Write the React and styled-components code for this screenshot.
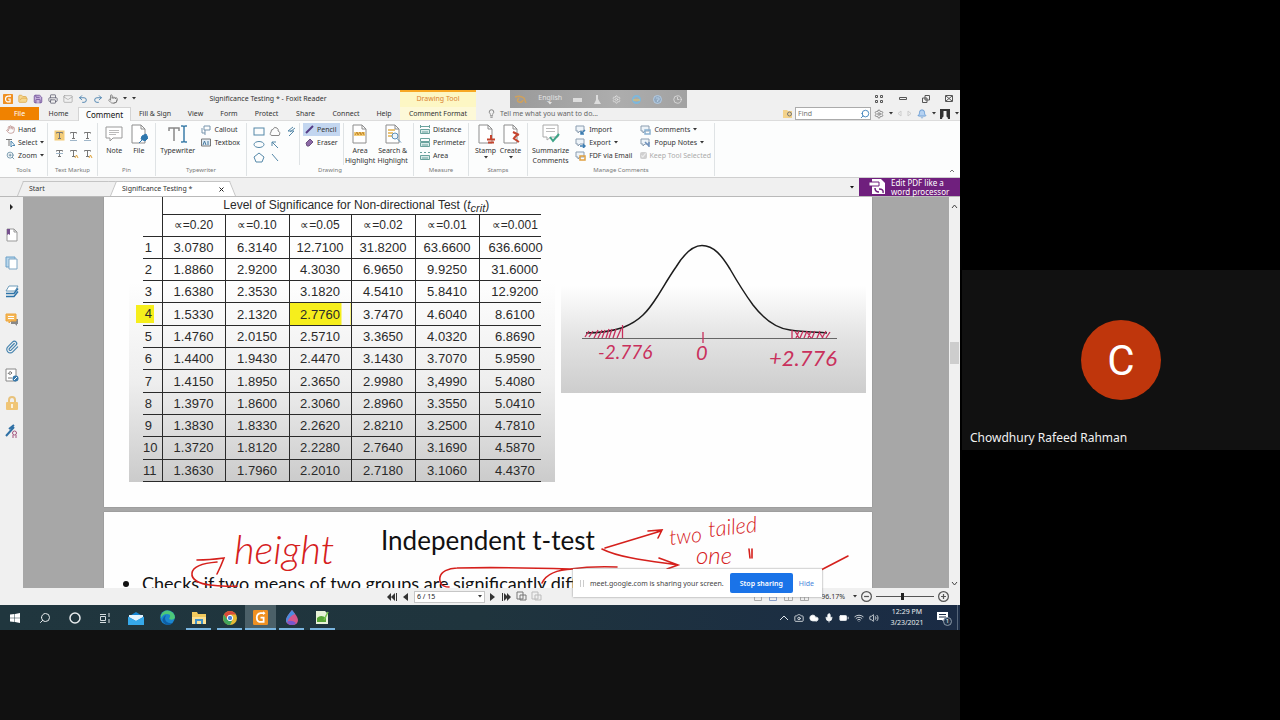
import React, { useState } from 'react';
import styled, { createGlobalStyle } from 'styled-components';
import {
    Search, Bell, Settings, Undo2, Redo2, Printer, Save, Mail, FolderOpen, Pointer, ZoomIn, Hand,
    Lightbulb, Paperclip, Mic, Volume2, Cloud, Wifi, Circle, Clock3, Camera, BatteryMedium,
} from 'lucide-react';

const GlobalStyle = createGlobalStyle`
    * { box-sizing: border-box; }
    body {
        margin: 0;
        background: #000;
        font-family: "Noto Sans", "Open Sans", sans-serif;
    }
    button, input, select { font-family: inherit; }
    svg { flex: none; display: block; }
`;

/* ---------- meeting ---------- */

const Meeting = styled.div`
    display: flex;
    min-height: 100vh;
`;
const Presentation = styled.main`
    flex: 3;
    min-width: 0;
    display: flex;
    align-items: center;
    background: #111;
`;
const Participants = styled.aside`
    flex: 1;
    min-width: 0;
    display: flex;
    align-items: center;
    background: #000;
`;
const Tile = styled.div`
    flex: 1;
    margin-left: 2px;
    height: 180px;
    background: #111;
    color: #f1f1f1;
    display: grid;
    grid-template-rows: 1fr auto 1fr;
    justify-items: center;
`;
const Avatar = styled.div`
    grid-row: 2;
    width: 80px;
    height: 80px;
    border-radius: 50%;
    background: #bf360c;
    color: #fff;
    display: flex;
    align-items: center;
    justify-content: center;
    font: 42px Roboto, sans-serif;
`;
const PersonName = styled.div`
    grid-row: 3;
    align-self: end;
    justify-self: start;
    padding: 0 8px 3px;
    font-size: 12px;
    line-height: 18px;
`;

/* ---------- reader window ---------- */

const Screen = styled.div`
    position: relative;
    width: 100%;
    aspect-ratio: 16 / 9;
    overflow: hidden;
    display: flex;
    flex-direction: column;
    background: #f0f0f0;
    color: #333;
    font-size: 7px;
    line-height: 10px;
    white-space: nowrap;
`;
const TitleBar = styled.div`
    height: 17px;
    flex: none;
    display: flex;
    align-items: center;
`;
const QuickAccess = styled.div`
    width: 136px;
    padding-left: 3px;
    display: flex;
    align-items: center;
    gap: 5px;
`;
const WindowTitle = styled.div`
    width: 264px;
    text-align: center;
`;
const ToolTitle = styled.div`
    width: 76px;
    height: 17px;
    line-height: 14px;
    text-align: center;
    color: #d88233;
    background: #fdf7c4;
    border-top: 2px solid #f7a823;
`;
const Spacer = styled.div`
    flex: 1;
`;
const IconButton = styled.button`
    border: 0;
    padding: 0;
    background: none;
    color: ${(p) => p.$color || '#444'};
    width: ${(p) => (p.$w ? `${p.$w}px` : 'auto')};
    align-self: ${(p) => p.$align || 'auto'};
    display: flex;
    align-items: center;
    justify-content: center;
`;
const InputToolbar = styled.div`
    position: absolute;
    left: 510px;
    top: 0;
    width: 177px;
    height: 18px;
    padding: 0 5px 0 4px;
    display: flex;
    align-items: center;
    justify-content: space-between;
    color: #e4e4e4;
    background: linear-gradient(90deg, #9a9a9a, #adadad 60%, #a2a2a2);
`;
const Language = styled.button`
    border: 0;
    padding: 0;
    background: none;
    color: inherit;
    font-size: 7px;
    line-height: 9px;
    display: flex;
    flex-direction: column;
    align-items: center;
`;

const TabRow = styled.nav`
    height: 14px;
    flex: none;
    display: flex;
    align-items: stretch;
    border-bottom: 1px solid #dcdcdc;
`;
const RibbonTab = styled.button`
    width: ${(p) => p.$w}px;
    border: 0;
    padding: 0;
    font-size: 7px;
    line-height: 13px;
    color: ${(p) => (p.$file ? '#fff' : '#333')};
    background: ${(p) => (p.$file ? '#f08200' : p.$tool ? '#fdf9d8' : 'none')};
    ${(p) => p.$active && `
        background: #fcfdfd;
        color: #111;
        margin-bottom: -1px;
        box-shadow: inset 1px 1px #d4d4d4, inset -1px 0 #d4d4d4;
        font-size: 8px;
    `}
`;
const TellMe = styled.div`
    display: flex;
    align-items: center;
    gap: 4px;
    padding-left: 11px;
    color: #666;
`;
const FindBox = styled.label`
    display: flex;
    align-items: center;
    gap: 2px;
    color: #d9a441;
`;
const FindField = styled.span`
    display: flex;
    align-items: center;
    width: 76px;
    height: 13px;
    background: #fff;
    border: 1px solid #ababab;
    color: #2f77b5;
    input {
        flex: 1;
        min-width: 0;
        border: 0;
        padding: 0 2px;
        outline: 0;
        background: none;
        font-size: 7px;
    }
`;
const MirroredSearch = styled(Search)`
    transform: scaleX(-1);
`;
const AccountTools = styled.div`
    width: 89px;
    padding: 0 1px 0 3px;
    display: flex;
    align-items: center;
    justify-content: space-between;
`;

const Ribbon = styled.div`
    height: 57px;
    flex: none;
    display: flex;
    padding: 2px 0 1px;
    background: #fcfdfd;
    border-bottom: 1px solid #cfcfcf;
`;
const Group = styled.section`
    width: ${(p) => p.$w}px;
    border-right: 1px solid #dfe3e5;
    display: flex;
    flex-direction: column;
`;
const GroupBody = styled.div`
    height: 42px;
    flex: none;
    display: flex;
    gap: ${(p) => p.$gap || 0}px;
    padding: 0 4px;
`;
const GroupName = styled.div`
    text-align: center;
    color: #777;
    font-size: 6px;
    line-height: 11px;
`;
const Stack = styled.div`
    display: flex;
    flex-direction: column;
    ${(p) => p.$ruled && 'border-left: 1px solid #dfe3e5; border-right: 1px solid #dfe3e5; padding: 0 3px;'}
`;
const SmallTool = styled.button`
    height: 13px;
    border: 0;
    padding: 0 2px;
    display: flex;
    align-items: center;
    gap: 3px;
    font-size: 7px;
    color: #333;
    background: ${(p) => (p.$on ? '#c3d6f0' : 'none')};
`;
const BigTool = styled.button`
    flex: 1;
    border: 0;
    padding: 1px 0 0;
    background: none;
    display: flex;
    flex-direction: column;
    align-items: center;
    font-size: 7px;
    line-height: 10px;
    color: #333;
    svg { margin-bottom: 2px; }
`;
const ToolGrid = styled.div`
    display: grid;
    grid-template-columns: repeat(3, ${(p) => p.$cell}px);
    grid-auto-rows: ${(p) => p.$row}px;
    align-content: center;
`;
const KeepSelected = styled.label`
    height: 13px;
    padding: 0 2px;
    display: flex;
    align-items: center;
    gap: 2px;
    color: #aaa;
    input {
        width: 7px;
        height: 7px;
        margin: 0;
    }
`;

const DocTabs = styled.div`
    height: 19px;
    flex: none;
    display: flex;
    align-items: flex-end;
    padding-left: 23px;
    border-bottom: 1px solid #b9b9b9;
`;
const DocTab = styled.div`
    position: relative;
    height: 15px;
    width: ${(p) => p.$w}px;
    padding: 0 6px;
    display: flex;
    align-items: center;
    justify-content: space-between;
    border-top: 1px solid #c4c4c4;
    background: ${(p) => (p.$active ? '#fff' : '#f0f0f0')};
    &::before, &::after {
        content: '';
        position: absolute;
        top: -1px;
        bottom: 0;
        width: 7px;
        background: inherit;
        border-top: 1px solid #c4c4c4;
    }
    &::before {
        left: -3px;
        transform: skewX(-22deg);
        border-left: 1px solid #c4c4c4;
    }
    &::after {
        right: -3px;
        transform: skewX(22deg);
        border-right: 1px solid #c4c4c4;
    }
    span, button { position: relative; z-index: 1; }
`;
const Promo = styled.a`
    align-self: stretch;
    width: 101px;
    margin-left: 4px;
    padding-left: 10px;
    display: flex;
    align-items: center;
    gap: 5px;
    background: #6f1f7d;
    color: #fff;
    font-size: 8px;
    line-height: 9px;
    text-decoration: none;
`;

const Workspace = styled.div`
    flex: 1;
    min-height: 0;
    display: flex;
`;
const SideBar = styled.div`
    width: 23px;
    display: flex;
    flex-direction: column;
    align-items: center;
    gap: 12px;
    padding-top: 2px;
    button { height: 16px; }
`;
const Pages = styled.div`
    flex: 1;
    min-width: 0;
    overflow: hidden;
    padding: 0 77px 0 81px;
    display: flex;
    flex-direction: column;
    gap: 5px;
    background: #a7a7a7;
`;
const Sheet = styled.article`
    position: relative;
    height: ${(p) => p.$h}px;
    flex: none;
    background: #fefefe;
    box-shadow: 0 0 1px #777;
    color: #111;
`;
const Figures = styled.div`
    display: flex;
    padding-left: 25px;
    gap: 6px;
`;
const TableFigure = styled.div`
    padding: 0 14px;
    height: 285px;
    background: linear-gradient(#fefefe 30%, #eee 65%, #cbcbcb);
`;
const CritTable = styled.table`
    border-collapse: collapse;
    table-layout: fixed;
    width: 398px;
    height: 285px;
    font: 13px "Liberation Sans", sans-serif;
    color: #2a2a2a;
    th, td {
        padding: 0;
        font-weight: 400;
        text-align: center;
        line-height: 15px;
        border-bottom: 1px solid #2a2a2a;
        border-left: 1px solid #2a2a2a;
    }
    thead th { font-size: 12px; }
    tr { height: 22px; }
    tr > :first-child {
        border-left: 0;
        padding-right: 8px;
    }
    tr > :nth-child(7) { padding-left: 9px; }
    thead tr:first-child { height: 17px; }
    thead tr:first-child > :first-child { border-bottom: 0; }
    thead tr:first-child > :last-child { padding-left: 9px; }
    sub {
        font-size: 11px;
        line-height: 0;
    }
`;
const MarkedCell = styled.td`
    background: linear-gradient(90deg, #f6ee1c 52px, transparent 52px);
`;
const RowMark = styled.mark`
    display: block;
    margin: 0 0 0 -7px;
    padding-left: 7px;
    line-height: 18px;
    background: #f6ee1c;
    color: inherit;
`;
const Curve = styled.svg`
    margin-top: 43px;
    width: 305px;
    height: 153px;
`;
const Heading = styled.h1`
    margin: 0;
    padding: 11px 0 0 277px;
    font: 26px/34px Lato, sans-serif;
`;
const Bullets = styled.ul`
    margin: 0;
    padding: 16px 0 0 38px;
    font: 18px/20px Lato, sans-serif;
`;
const Ink = styled.svg`
    position: absolute;
    left: 0;
    top: 0;
    overflow: visible;
    text { font-family: Lato, sans-serif; font-style: italic; font-weight: 300; }
`;
const ScrollBar = styled.div`
    width: 11px;
    display: flex;
    flex-direction: column;
    align-items: center;
    justify-content: space-between;
    padding: 7px 0 2px;
    background: #f0f0f0;
`;
const ScrollThumb = styled.div`
    width: 9px;
    height: 22px;
    margin: 133px 0 auto;
    background: #cdcdcd;
`;

const StatusBar = styled.div`
    height: 17px;
    flex: none;
    display: flex;
    align-items: center;
    padding-left: 387px;
    color: #333;
`;
const PageNav = styled.div`
    display: flex;
    align-items: center;
    gap: 4px;
`;
const PageField = styled.div`
    width: 71px;
    height: 12px;
    padding-right: 2px;
    display: flex;
    align-items: center;
    border: 1px solid #c6c6c6;
    background: #fff;
`;
const PageSelect = styled.select`
    appearance: none;
    flex: 1;
    height: 10px;
    padding: 0 0 0 2px;
    border: 0;
    background: none;
    color: #222;
    font-size: 7px;
    line-height: 10px;
`;
const ViewTools = styled.div`
    display: flex;
    align-items: center;
    gap: 7px;
    color: #999;
`;
const Zoom = styled.div`
    display: flex;
    align-items: center;
    gap: 4px;
    padding: 0 11px 0 12px;
`;
const ZoomSlider = styled.input`
    appearance: none;
    width: 58px;
    height: 9px;
    margin: 0;
    background: linear-gradient(#555, #555) center / 100% 1px no-repeat;
    &::-webkit-slider-thumb {
        appearance: none;
        width: 3px;
        height: 7px;
        background: #222;
    }
`;
const ShareBar = styled.div`
    position: absolute;
    left: 573px;
    top: 479px;
    width: 249px;
    height: 28px;
    padding: 0 8px 0 7px;
    display: flex;
    align-items: center;
    justify-content: space-between;
    background: #fff;
    color: #444;
    box-shadow: 0 0 2px #888;
    font: 7px "Noto Sans", sans-serif;
`;
const StopButton = styled.button`
    width: 63px;
    height: 20px;
    padding: 0;
    border: 0;
    border-radius: 2px;
    background: #1a73e8;
    color: #fff;
    font-size: 7px;
    font-weight: 600;
`;
const HideButton = styled.button`
    border: 0;
    padding: 0;
    background: none;
    color: #4a86dc;
    font-size: 7px;
`;
const Grip = styled.span`
    width: 4px;
    height: 7px;
    border: 1px solid #ccc;
    border-width: 0 1px;
`;

const TaskBar = styled.div`
    height: 25px;
    flex: none;
    display: flex;
    background: linear-gradient(90deg, #20363e, #1f343d 50%, #1a2b45);
    color: #e8ecee;
`;
const TaskButton = styled.button`
    width: ${(p) => p.$w || 31}px;
    border: 0;
    padding: 0;
    display: flex;
    align-items: center;
    justify-content: center;
    color: inherit;
    background: ${(p) => (p.$active ? '#4b6068' : 'none')};
    background-clip: padding-box;
    ${(p) => p.$open && `
        box-shadow: inset 0 -2px #79b4de;
        border-left: 3px solid transparent;
        border-right: 3px solid transparent;
    `}
    ${(p) => p.$active && 'border-width: 0;'}
`;
const Tray = styled.div`
    display: flex;
    align-items: center;
    gap: 5px;
    padding-right: 8px;
`;
const Clock = styled.div`
    width: 40px;
    text-align: center;
    line-height: 11px;
    padding-top: 1px;
    font-size: 7px;
`;
const Notice = styled.button`
    position: relative;
    width: 31px;
    border: 0;
    border-right: 1px solid #56667a;
    margin: 0 2px 0 0;
    padding: 0;
    background: none;
    display: flex;
    align-items: center;
    justify-content: center;
    color: #fff;
`;
const NoticeCount = styled.span`
    position: absolute;
    left: 16px;
    top: 12px;
    width: 9px;
    height: 9px;
    border-radius: 50%;
    border: 1px solid #8b99a8;
    background: #22344c;
    color: #fff;
    font-size: 6px;
    line-height: 7px;
`;

/* ---------- icons ---------- */

const Svg = ({ w = 10, h = w, box = `0 0 ${w} ${h}`, children, ...rest }) => (
    <svg width={w} height={h} viewBox={box} fill="none" stroke="#777" strokeWidth="1" aria-hidden="true" {...rest}>
        {children}
    </svg>
);
const Caret = ({ color = '#333', size = 4 }) => (
    <Svg w={size} h={3} box="0 0 4 3" stroke="none" fill={color}><path d="M0 0h4l-2 2.6z" /></Svg>
);
const FoxitLogo = ({ size }) => (
    <Svg w={size} box="0 0 12 12">
        <rect width="12" height="12" rx="1" fill="#ef9022" stroke="none" />
        <path d="M9 2.500H6Q3 3 3 6t2 3.500h3.500V6H6" stroke="#fff" strokeWidth="1.400" />
        <path d="M8 1l2 1.500L8 4z" fill="#fff" stroke="none" />
    </Svg>
);
const Markup = ({ on, extra, blue }) => (
    <Svg w={11} box="0 0 11 11" stroke="#777">
        {on && <rect x=".5" y=".5" width="10" height="10" fill="#f3cc78" stroke="none" />}
        <path d="M2.500 3.500v-1h6v1M5.500 2.500v6M4 8.500h3" />
        {extra && <path d={extra} stroke={blue ? '#9fb6c9' : '#e0a33a'} />}
    </Svg>
);
const FileSheet = ({ children }) => (
    <Svg w={18} h={20}>
        <path d="M2 1h9l4 4v14H2z M11 1v4h4" fill="#fff" stroke="#8d8d8d" />
        {children}
    </Svg>
);
const Measure = ({ d }) => (
    <Svg w={10} h={9} stroke="#6aa29d"><path d="M.500 4.500v4h9v-4zM3 8V6M5 8V6M7 8V6" fill="#d9ebe9" /><path d={d} /></Svg>
);
const Transfer = ({ color, d }) => (
    <Svg w={11} h={10}>
        <path d="M1 1h8v5H5L3 8V6H1z" fill="#eef4f9" stroke="#8b9db0" />
        <path d={d} stroke={color} strokeWidth="1.500" />
    </Svg>
);

const quick = [
    ['Foxit', <FoxitLogo size={10} />],
    ['Open', <FolderOpen size={10} color="#dda94c" fill="#f6d891" />],
    ['Save', <Save size={10} color="#6b4a94" fill="#c8b5de" />],
    ['Print', <Printer size={10} color="#667" />],
    ['Email', <Mail size={10} color="#999" strokeWidth={1.5} />],
    ['Undo', <Undo2 size={10} color="#3b77a8" />],
    ['Redo', <Redo2 size={10} color="#3b77a8" />],
    ['Touch mode', <Pointer size={10} color="#777" />],
];

const tabs = [
    ['File', 39], ['Home', 39], ['Comment', 53], ['Fill & Sign', 48], ['View', 33], ['Form', 34],
    ['Protect', 41], ['Share', 37], ['Connect', 44], ['Help', 32], ['Comment Format', 76],
];

const markups = [
    { name: 'Highlight', on: true },
    { name: 'Squiggly', extra: 'M2 10.5h7', blue: true },
    { name: 'Underline', extra: 'M2 10.5h7', blue: true },
    { name: 'Strikeout', extra: 'M2 5.5h7', blue: true },
    { name: 'Replace', extra: 'M7 10l1.500-3 1.500 3' },
    { name: 'Insert', extra: 'M7 10l1.500-3 1.500 3' },
];

const shapes = [
    ['Rectangle', <rect x="1" y="2" width="10" height="7" />],
    ['Cloud', <path d="M3 9.500Q0 9 2 6 2 3 4 3.500 5 0 8 2q2 2 1 3 3 1 1 4.500z" stroke="#888" />],
    ['Polyline', <path d="M8 1L3 5h6l-5 5M10 2L5 6" />],
    ['Oval', <ellipse cx="6" cy="5.500" rx="5" ry="3" />],
    ['Arrow', <path d="M9 9L3 3M3 7V3h4" />],
    null,
    ['Polygon', <path d="M6 1l5 4-2 5H3L1 5z" />],
    ['Line', <path d="M3 2l6 7" />],
];

const alphas = ['0.20', '0.10', '0.05', '0.02', '0.01', '0.001'];
const critical = [
    ['3.0780', '6.3140', '12.7100', '31.8200', '63.6600', '636.6000'],
    ['1.8860', '2.9200', '4.3030', '6.9650', '9.9250', '31.6000'],
    ['1.6380', '2.3530', '3.1820', '4.5410', '5.8410', '12.9200'],
    ['1.5330', '2.1320', '2.7760', '3.7470', '4.6040', '8.6100'],
    ['1.4760', '2.0150', '2.5710', '3.3650', '4.0320', '6.8690'],
    ['1.4400', '1.9430', '2.4470', '3.1430', '3.7070', '5.9590'],
    ['1.4150', '1.8950', '2.3650', '2.9980', '3,4990', '5.4080'],
    ['1.3970', '1.8600', '2.3060', '2.8960', '3.3550', '5.0410'],
    ['1.3830', '1.8330', '2.2620', '2.8210', '3.2500', '4.7810'],
    ['1.3720', '1.8120', '2.2280', '2.7640', '3.1690', '4.5870'],
    ['1.3630', '1.7960', '2.2010', '2.7180', '3.1060', '4.4370'],
];

const sideTools = [
    ['Expand', <Svg w={5} h={6} box="0 0 5 6" stroke="none" fill="#222"><path d="M1 0v6l3-3z" /></Svg>],
    ['Bookmarks', <Svg w={12} h={14}><path d="M1 1h7l3 3v9H1zM8 1v3h3" fill="#fff" stroke="#999" /><path d="M1 1h3v6L2.500 6 1 7z" fill="#77528f" stroke="none" /></Svg>],
    ['Pages', <Svg w={13} h={14}><path d="M1 1h9v10H1z" fill="#b9d7ec" stroke="#6aa0c8" /><path d="M4 3h8v10H4z" fill="#fff" stroke="#7ea6c4" /></Svg>],
    ['Layers', <Svg w={14} h={13}><path d="M4 1h9l-3 5H1z" fill="#fff" stroke="#6f9cba" /><path d="M1 8.500h8l4-5M1 11.500h8l4-5" stroke="#2d73a8" strokeWidth="1.500" /></Svg>],
    ['Comments', <Svg w={14} h={13}><path d="M6 6h7v5h-1v2l-2-2H6z" fill="#888" stroke="none" /><path d="M1 1h10v7H6L4 10V8H1z" fill="#f5b756" stroke="#eda53c" /><path d="M3 3.500h6M3 5.500h6" stroke="#fff" /></Svg>],
    ['Attachments', <Paperclip size={14} color="#4583ae" strokeWidth={2} />],
    ['Review', <Svg w={14} h={14}><path d="M1 1h10v12H1z" fill="#fff" stroke="#888" /><path d="M3 6q2-4 4-1-3 3-3 0M3 10h4" /><circle cx="10.500" cy="10.500" r="3" fill="#3778aa" stroke="none" /><path d="M9 12l3-3" stroke="#fff" /></Svg>],
    ['Security', <Svg w={12} h={14}><path d="M3 7V4q0-3 3-3t3 3v3" stroke="#e8c27c" strokeWidth="2" /><rect y="6" width="12" height="8" rx="1" fill="#f0c576" stroke="none" /><path d="M6 8v4" stroke="#fff" strokeWidth="1.500" /></Svg>],
    ['Signatures', <Svg w={13} h={14}><path d="M1 12l8-9M4 5l5-4" stroke="#2f70a5" strokeWidth="2" /><circle cx="9.500" cy="9" r="2" stroke="#a2527c" /><path d="M8 11v3M11 11v3" stroke="#a2527c" /></Svg>],
];

const TopBars = () => (
    <>
        <TitleBar>
            <QuickAccess>
                {quick.map(([name, icon]) => <IconButton key={name} aria-label={name}>{icon}</IconButton>)}
                <Caret />
                <Caret />
            </QuickAccess>
            <WindowTitle>Significance Testing * - Foxit Reader</WindowTitle>
            <ToolTitle>Drawing Tool</ToolTitle>
            <Spacer />
            <IconButton $w={23} aria-label="Ribbon options">
                <Svg w={9} h={8} stroke="#555"><path d="M.500.500h2v2h-2zM5.500.500h2v2h-2zM.500 5.500h2v2h-2zM5.500 5.500h2v2h-2z" /></Svg>
            </IconButton>
            <IconButton $w={23} aria-label="Minimize"><Svg w={8} h={4} stroke="#555"><path d="M.500.500h7v2h-7z" /></Svg></IconButton>
            <IconButton $w={23} aria-label="Restore"><Svg w={8} stroke="#555"><path d="M3 .500h4.500V5H3zM.500 3H5v4.500H.500z" /></Svg></IconButton>
            <IconButton $w={23} aria-label="Close"><Svg w={8} stroke="#555"><path d="M.500.500h7v6h-7zM1 1l6 5M7 1L1 6" /></Svg></IconButton>
        </TitleBar>
        <TabRow>
            {tabs.map(([name, w]) => (
                <RibbonTab key={name} $w={w} $file={name === 'File'} $active={name === 'Comment'} $tool={name === 'Comment Format'}>
                    {name}
                </RibbonTab>
            ))}
            <TellMe><Lightbulb size={9} />Tell me what you want to do...</TellMe>
            <Spacer />
            <FindBox>
                <Svg w={10} h={9}><path d="M0 1h4l1 1h4v7H0z" fill="#f3d28a" stroke="none" /><circle cx="6.500" cy="5" r="2" stroke="#777" /></Svg>
                <FindField>
                    <input placeholder="Find" aria-label="Find" />
                    <MirroredSearch size={10} />
                </FindField>
            </FindBox>
            <AccountTools>
                <Settings size={10} color="#777" />
                <Caret />
                <Svg w={5} h={7} stroke="#ccc"><path d="M4 1v5L1 3.500z" /></Svg>
                <Svg w={5} h={7} stroke="#ccc"><path d="M1 1v5l3-2.500z" /></Svg>
                <Bell size={10} color="#5b93cf" fill="#b5d2f2" />
                <Caret />
                <Svg w={10}><path d="M0 0h10v10H0z" fill="#333" stroke="none" /><path d="M2 10q0-2 1.500-2.500V2h3v5.500Q8 8 8 10z" fill="#f2f2f2" stroke="none" /></Svg>
                <Caret />
            </AccountTools>
        </TabRow>
    </>
);

const RibbonTools = () => (
    <Ribbon>
        <Group $w={48}>
            <GroupBody>
                <Stack>
                    <SmallTool><Hand size={9} color="#b88a86" />Hand</SmallTool>
                    <SmallTool><Svg w={9}><path d="M0 1.500h6M3 1.500V8" /><path d="M5 3v6l1.500-1.500H9z" fill="#fff" stroke="#4b86b0" /></Svg>Select <Caret /></SmallTool>
                    <SmallTool><ZoomIn size={9} color="#55809a" />Zoom <Caret /></SmallTool>
                </Stack>
            </GroupBody>
            <GroupName>Tools</GroupName>
        </Group>
        <Group $w={50}>
            <GroupBody>
                <ToolGrid $cell={14} $row={18}>
                    {markups.map(({ name, ...rest }) => <IconButton key={name} aria-label={name}><Markup {...rest} /></IconButton>)}
                </ToolGrid>
            </GroupBody>
            <GroupName>Text Markup</GroupName>
        </Group>
        <Group $w={58}>
            <GroupBody>
                <BigTool>
                    <Svg w={18} h={20}><path d="M1 3h16v11H8l-3 3v-3H1z" fill="#fff" stroke="#999" /><path d="M4 6.500h10M4 8.500h10M4 10.500h7" stroke="#bbb" /></Svg>
                    Note
                </BigTool>
                <BigTool>
                    <FileSheet><path d="M12 12l4-2 2 4-3 3-4-2zM13 15l-4 4" fill="#2e76ad" stroke="#2e76ad" /></FileSheet>
                    File
                </BigTool>
            </GroupBody>
            <GroupName>Pin</GroupName>
        </Group>
        <Group $w={91}>
            <GroupBody $gap={4}>
                <BigTool>
                    <Svg w={20} h={20}><path d="M1 7V4h10v3M6 4v13" stroke="#888" strokeWidth="1.500" /><path d="M13 2h2l1 1 1-1h2M13 18h2l1-1 1 1h2M16 3v14" stroke="#3c7ea9" strokeWidth="1.500" /></Svg>
                    Typewriter
                </BigTool>
                <Stack>
                    <SmallTool><Svg w={10}><path d="M3 1h6v4H3zM1 3v5h3M4 5v5" stroke="#7995ad" /></Svg>Callout</SmallTool>
                    <SmallTool><Svg w={10} h={9}><path d="M.500 1h9v7h-9z" fill="#e3edf5" /><path d="M2 7l1.500-4L5 7M6 4h2M6 6h2" stroke="#45799f" /></Svg>Textbox</SmallTool>
                </Stack>
            </GroupBody>
            <GroupName>Typewriter</GroupName>
        </Group>
        <Group $w={167}>
            <GroupBody>
                <ToolGrid $cell={16} $row={13}>
                    {shapes.map((s, i) => (s
                        ? <IconButton key={s[0]} aria-label={s[0]}><Svg w={12} h={11} stroke="#5588a8">{s[1]}</Svg></IconButton>
                        : <span key={i} />))}
                </ToolGrid>
                <Stack $ruled>
                    <SmallTool $on><Svg w={9}><path d="M1 8l7-7" stroke="#553c86" strokeWidth="2" /></Svg>Pencil</SmallTool>
                    <SmallTool><Svg w={9}><path d="M1 5l4-4 3 3-4 4H2z" fill="#8d6aa6" stroke="#6b5180" /></Svg>Eraser</SmallTool>
                </Stack>
                <BigTool>
                    <FileSheet><path d="M3 8h11v4H3z" fill="#f3cd79" stroke="none" /><path d="M4 11l2-3 1 3 2-3 1 3 2-3 1 3" stroke="#c58a2a" /></FileSheet>
                    Area<br />Highlight
                </BigTool>
                <BigTool>
                    <FileSheet><path d="M4 6h7M4 9h5M4 12h4" stroke="#e3b04b" strokeWidth="1.500" /><circle cx="11" cy="12" r="3" fill="#edf5fc" stroke="#5a8fb8" /><path d="M13 14.500l4 4" stroke="#5a8fb8" /></FileSheet>
                    Search &amp;<br />Highlight
                </BigTool>
            </GroupBody>
            <GroupName>Drawing</GroupName>
        </Group>
        <Group $w={55}>
            <GroupBody>
                <Stack>
                    <SmallTool><Measure d="M.500 0v3M9.500 0v3M1 1.500h8" />Distance</SmallTool>
                    <SmallTool><Measure d="M.500.500h9v3h-9z" />Perimeter</SmallTool>
                    <SmallTool><Measure d="M0 1.500h2M4 1.500h2M8 1.500h2" />Area</SmallTool>
                </Stack>
            </GroupBody>
            <GroupName>Measure</GroupName>
        </Group>
        <Group $w={59}>
            <GroupBody>
                <BigTool>
                    <FileSheet><path d="M14 11v5M10 15.500h8M11 18.500h6" stroke="#c4452f" strokeWidth="2" /></FileSheet>
                    Stamp<Caret />
                </BigTool>
                <BigTool>
                    <FileSheet><path d="M11 8l6 3M16 10l-4 4M11 14l6 4" stroke="#c4452f" strokeWidth="2" /></FileSheet>
                    Create<Caret />
                </BigTool>
            </GroupBody>
            <GroupName>Stamps</GroupName>
        </Group>
        <Group $w={187}>
            <GroupBody $gap={4}>
                <BigTool>
                    <Svg w={18} h={20}><path d="M1 1h15v12H9l-4 3v-3H1z" fill="#fff" stroke="#aaa" /><path d="M4 4.500h9M4 7.500h9" stroke="#bbb" /><path d="M8 13l3 4 6-7" stroke="#3ea487" strokeWidth="2" /></Svg>
                    Summarize<br />Comments
                </BigTool>
                <Stack>
                    <SmallTool><Transfer color="#3d7db1" d="M10 5l-4 4M6 6v3h3" />Import</SmallTool>
                    <SmallTool><Transfer color="#3d7db1" d="M5 8h5M8 6l2 2-2 2" />Export <Caret /></SmallTool>
                    <SmallTool><Transfer color="#e0a040" d="M5 5h5v4H5z" />FDF via Email</SmallTool>
                </Stack>
                <Stack>
                    <SmallTool><Transfer color="#89b0cf" d="M5 5h5v4H5z" />Comments <Caret /></SmallTool>
                    <SmallTool><Transfer color="#6f91bd" d="M5 4l4 4M9 4v5" />Popup Notes <Caret /></SmallTool>
                    <KeepSelected><input type="checkbox" defaultChecked disabled />Keep Tool Selected</KeepSelected>
                </Stack>
            </GroupBody>
            <GroupName>Manage Comments</GroupName>
        </Group>
        <Spacer />
        <IconButton $w={16} $align="flex-end" aria-label="Collapse ribbon">
            <Svg w={6} h={8}><path d="M1 4l2-2 2 2" /></Svg>
        </IconButton>
    </Ribbon>
);

const CriticalValues = () => (
    <CritTable>
        <colgroup>
            <col width="19" /><col width="63" /><col width="64" /><col width="62" /><col width="64" /><col width="64" /><col width="62" />
        </colgroup>
        <thead>
            <tr><th /><th colSpan="6">Level of Significance for Non-directional Test (<i>t<sub>crit</sub></i>)</th></tr>
            <tr><th />{alphas.map((a) => <th key={a}>∝={a}</th>)}</tr>
        </thead>
        <tbody>
            {critical.map((row, r) => (
                <tr key={row[0]}>
                    <th>{r === 3 ? <RowMark>{r + 1}</RowMark> : r + 1}</th>
                    {row.map((value, c) => (r === 3 && c === 2
                        ? <MarkedCell key={c}>{value}</MarkedCell>
                        : <td key={c}>{value}</td>))}
                </tr>
            ))}
        </tbody>
    </CritTable>
);

const BellCurve = () => (
    <Curve viewBox="561 240 305 153" fill="none" stroke="#c9305c">
        <defs>
            <linearGradient id="paper" x1="0" y1="0" x2="0" y2="1">
                <stop offset=".3" stopColor="#fefefe" />
                <stop offset=".65" stopColor="#e2e2e2" />
                <stop offset="1" stopColor="#cdcdcd" />
            </linearGradient>
        </defs>
        <rect x="561" y="240" width="305" height="153" fill="url(#paper)" stroke="none" />
        <path d="M582 338.500H837" stroke="#666" />
        <path d="M586 333Q606 333 623 327.500C640 321 648 311 657 297C664 286 669 277 676 267C684 254 692 245.500 702 245.500C714 245.500 722 256 730 269C738 283 745 294 753 305C763 318 775 328 790 330C803 332 812 332 827 333" stroke="#1c1c1c" strokeWidth="1.500" />
        <path d="M585 337l4-6M589 337l4-6M594 338l4-8M598 338l4-8M602 338l3-8M606 338l3-9M609 338l3-9M613 338l3-9M617 338l4-9M622.500 325v13M703 332v11M792 330v9M796 338l3-7M800 338l3-7M804 338l3-7M808 338l3-7M812 338l3-7M817 338l3-7M822 338l4-7M826 338l4-6M795 331l4 7M807 332l4 6M819 332l4 6" strokeWidth="1.300" />
        <g fill="#c9305c" stroke="none" fontFamily="Lato, sans-serif" fontStyle="italic">
            <text x="598" y="359" fontSize="19">-2.776</text>
            <text x="696" y="360" fontSize="20">0</text>
            <text x="769" y="366" fontSize="22">+2.776</text>
        </g>
    </Curve>
);

const LectureInk = () => (
    <Ink width="768" height="76" viewBox="104 512 768 76" fill="none" stroke="#d5201c" strokeWidth="1.600" strokeLinecap="round">
        <path d="M197 560q12 0 27-2-3 8-7 16M217 562c-12 1-24 4-25 11s8 11 18 12 18 2 27 1" />
        <path d="M605 548L661 531M648 531l14-1-4 8M602 549C620 558 650 561 678 565M659 558l19 7-11 4" />
        <path d="M449 587c-8 0-10-5-9-10s8-9 17-9c40-1 80 0 113 1q22-3 47-2M542 583q6-13 31-14" />
        <path d="M821 570l27-14M749 549l1 9M752 549l0 9" />
        <g fill="#d5201c" stroke="none">
            <text x="234" y="564" fontSize="40">height</text>
            <text x="670" y="545" fontSize="21" transform="rotate(-6 670 545)">two</text>
            <text x="709" y="537" fontSize="22" transform="rotate(-6 709 537)">tailed</text>
            <text x="696" y="564" fontSize="24">one</text>
        </g>
    </Ink>
);

const BottomBar = () => {
    const [zoom, setZoom] = useState(46);
    return (
        <StatusBar>
            <PageNav>
                <IconButton aria-label="First page"><Svg w={10} h={8} stroke="none" fill="#333"><path d="M4 0v8L0 4zM8 0v8L4 4zM9 0h1v8H9z" /></Svg></IconButton>
                <IconButton $w={9} aria-label="Previous page"><Svg w={5} h={8} stroke="none" fill="#333"><path d="M5 0v8L0 4z" /></Svg></IconButton>
                <PageField>
                    <PageSelect aria-label="Page" defaultValue="6"><option value="6">6 / 15</option></PageSelect>
                    <Caret />
                </PageField>
                <IconButton $w={7} aria-label="Next page"><Svg w={5} h={8} stroke="none" fill="#333"><path d="M0 0v8l5-4z" /></Svg></IconButton>
                <IconButton $w={12} aria-label="Last page"><Svg w={9} h={8} stroke="none" fill="#333"><path d="M0 0v8h1V0zM2 0v8l4-4zM5 0v8l4-4z" /></Svg></IconButton>
                <Svg w={11}><path d="M1 1h6v7H1zM4 4h6v5H4z" fill="#f0f0f0" /></Svg>
                <Svg w={11} stroke="#bbb"><path d="M1 1h6v7H1zM4 4h6v5H4z" fill="#f0f0f0" /></Svg>
            </PageNav>
            <Spacer />
            <ViewTools>
                <Svg w={8} stroke="#aaa"><path d="M.500.500h7v7h-7z" /></Svg>
                <Svg w={8} stroke="#8a9fc9"><path d="M.500.500h7v7h-7zM0 4h8" /></Svg>
                <Svg w={9} h={8} stroke="#aaa"><path d="M.500.500h8v7h-8zM4.500 0v8" /></Svg>
                <Svg w={9} h={8} stroke="#aaa"><path d="M.500.500h8v7h-8zM4.500 0v8M0 4h9" /></Svg>
            </ViewTools>
            <Zoom>
                96.17%
                <span />
                <Caret />
                <Svg w={11} box="0 0 9 9" stroke="#555"><circle cx="4.500" cy="4.500" r="4" /><path d="M2.500 4.500h4" /></Svg>
                <ZoomSlider type="range" aria-label="Zoom" value={zoom} onChange={(e) => setZoom(Number(e.target.value))} />
                <Svg w={11} box="0 0 9 9" stroke="#555"><circle cx="4.500" cy="4.500" r="4" /><path d="M2.500 4.500h4M4.500 2.500v4" /></Svg>
            </Zoom>
        </StatusBar>
    );
};

const WindowsBar = () => (
    <TaskBar>
        <TaskButton $w={30} aria-label="Start"><Svg w={10} stroke="none" fill="#fff"><path d="M0 1.500L4.500 1v3.700H0zM5 1l5-1v4.700H5zM0 5.200h4.500V9L0 8.500zM5 5.200h5V10L5 9z" /></Svg></TaskButton>
        <TaskButton $w={30} aria-label="Search"><MirroredSearch size={12} strokeWidth={2} /></TaskButton>
        <TaskButton $w={30} aria-label="Cortana"><Circle size={12} strokeWidth={3} /></TaskButton>
        <TaskButton $w={30} aria-label="Task view"><Svg w={11} h={10} stroke="#d5dde0"><path d="M0 1.500h6M.500 3.500h5v4h-5zM0 9.500h6M9 0v4M9 6v4" /></Svg></TaskButton>
        <TaskButton $w={32} aria-label="Mail"><Svg w={16} h={14}><path d="M0 6l8-5 8 5v8H0z" fill="#1686d4" stroke="none" /><path d="M1 4h14v2l-7 4-7-4z" fill="#e5f4fd" stroke="none" /><path d="M0 6l8 4 8-4v8H0z" fill="#36a9ea" stroke="none" /></Svg></TaskButton>
        <TaskButton aria-label="Edge"><Svg w={15}><circle cx="7.500" cy="7.500" r="7.300" fill="#1b86cf" stroke="none" /><path d="M1 5Q4-1 10 1q5 2 5 7-2 3-6 1 3-5-2-5-4 0-6 4z" fill="#4cc879" stroke="none" /><path d="M5 8q0 6 8 5-5 4-9 0-4-4 2-8z" fill="#0e5fa5" stroke="none" /></Svg></TaskButton>
        <TaskButton $open aria-label="Explorer"><Svg w={14} h={12}><path d="M0 0h5l1 2h8v10H0z" fill="#f2ca5e" stroke="none" /><path d="M0 5h14v7H0z" fill="#fbe093" stroke="none" /><path d="M3 12V7h8v5H9V9H5v3z" fill="#4191c9" stroke="none" /></Svg></TaskButton>
        <TaskButton $open aria-label="Chrome"><Svg w={14}><circle cx="7" cy="7" r="7" fill="#e5ba34" stroke="none" /><path d="M1 3.500Q3 0 7 0t6 3.500H7L4 8z" fill="#d94a3b" stroke="none" /><path d="M1 3.500Q-1 8 2 12q2 2 5 2l2-4-5-2z" fill="#41a55c" stroke="none" /><circle cx="7" cy="7" r="2.700" fill="#4b86da" stroke="#fff" /></Svg></TaskButton>
        <TaskButton $open $active aria-label="Foxit Reader"><FoxitLogo size={15} /></TaskButton>
        <TaskButton $open aria-label="Paint"><Svg w={12} h={15}><path d="M6 0q6 7 6 10 0 5-6 5t-6-5q0-3 6-10z" fill="#d3578c" stroke="none" /><path d="M6 0q-6 7-6 10 0 2 1 3 2-7 8-9z" fill="#4b8ce0" stroke="none" /><path d="M1 12q4-3 9 1-1 2-4 2-4 0-5-3z" fill="#7657cf" stroke="none" /></Svg></TaskButton>
        <TaskButton $open aria-label="Notepad++"><Svg w={13} h={14}><path d="M0 0h9l3 3v10H0z" fill="#e8f2d8" stroke="none" /><path d="M1 7q4-4 9 0v4H1z" fill="#58a637" stroke="none" /><path d="M12 1L8 9" stroke="#76c34d" strokeWidth="1.500" /></Svg></TaskButton>
        <Spacer />
        <Tray>
            <Svg w={10} h={8} stroke="#dfe5ea"><path d="M1 6l4-4 4 4" /></Svg>
            <Camera size={10} />
            <Cloud size={10} fill="#fff" />
            <Mic size={10} fill="#fff" />
            <BatteryMedium size={10} fill="#fff" />
            <Wifi size={10} />
            <Volume2 size={10} />
        </Tray>
        <Clock>12:29 PM<br />3/23/2021</Clock>
        <Notice aria-label="Notifications">
            <Svg w={11} h={11}><path d="M0 0h11v8H8v3L5 8H0z" fill="#fff" stroke="none" /><path d="M2 2.500h7M2 5h7" stroke="#1c2c45" /></Svg>
            <NoticeCount>1</NoticeCount>
        </Notice>
    </TaskBar>
);

const App = () => (
    <Meeting>
        <GlobalStyle />
        <Presentation>
            <Screen>
                <TopBars />
                <RibbonTools />
                <DocTabs>
                    <DocTab $w={93}><span>Start</span></DocTab>
                    <DocTab $w={114} $active>
                        <span>Significance Testing *</span>
                        <IconButton aria-label="Close tab"><Svg w={5} stroke="#222"><path d="M.500.500l4 4M4.500.500l-4 4" /></Svg></IconButton>
                    </DocTab>
                    <Spacer />
                    <IconButton $align="center" aria-label="All tabs"><Caret color="#111" size={6} /></IconButton>
                    <Promo href="#edit">
                        <Svg w={17} h={16}><path d="M3 0h9l4 4v11H3z" fill="#fff" stroke="none" /><path d="M0 3h10v4H0z" fill="#fff" stroke="#6f1f7d" /><path d="M6 9q0 4 4 4M14 14q1-4-4-4" stroke="#6f1f7d" strokeWidth="1.500" /></Svg>
                        <span>Edit PDF like a<br />word processor</span>
                    </Promo>
                </DocTabs>
                <Workspace>
                    <SideBar>
                        {sideTools.map(([name, icon]) => <IconButton key={name} aria-label={name}>{icon}</IconButton>)}
                    </SideBar>
                    <Pages>
                        <Sheet $h={310}>
                            <Figures>
                                <TableFigure><CriticalValues /></TableFigure>
                                <BellCurve />
                            </Figures>
                        </Sheet>
                        <Sheet $h={120}>
                            <Heading>Independent t-test</Heading>
                            <Bullets><li>Checks if two means of two groups are significantly different</li></Bullets>
                            <LectureInk />
                        </Sheet>
                    </Pages>
                    <ScrollBar>
                        <Svg w={7} h={5} stroke="#444"><path d="M1 4l2.500-3L6 4" /></Svg>
                        <ScrollThumb />
                        <Svg w={7} h={5} stroke="#444"><path d="M1 1l2.500 3L6 1" /></Svg>
                    </ScrollBar>
                </Workspace>
                <BottomBar />
                <WindowsBar />
                <InputToolbar>
                    <Svg w={13} h={9} stroke="#d0a15c"><path d="M1 2q5-2 9 1l2 5M5 3q-3 3 0 4t4-2" strokeWidth="1.500" /></Svg>
                    <Language>English<Caret color="#e4e4e4" /></Language>
                    <Svg w={9} h={5} stroke="none" fill="#ddd"><path d="M0 1h9v4H0z" /></Svg>
                    <Svg w={7} h={9} stroke="none" fill="#ddd"><path d="M2 0h2v4l3 5H0l2-4z" /></Svg>
                    <Settings size={9} />
                    <Svg w={9} stroke="#7cb8dc"><circle cx="4.500" cy="4.500" r="3.500" strokeWidth="2" /><path d="M1 5h7" stroke="#e1c669" /></Svg>
                    <Svg w={9} stroke="#b4cbe2"><circle cx="4.500" cy="4.500" r="4" fill="#91a9c0" /><path d="M3 3h3v2H4.500v2" /></Svg>
                    <Clock3 size={9} />
                </InputToolbar>
                <ShareBar>
                    <Grip />
                    <span>meet.google.com is sharing your screen.</span>
                    <StopButton>Stop sharing</StopButton>
                    <HideButton>Hide</HideButton>
                </ShareBar>
            </Screen>
        </Presentation>
        <Participants>
            <Tile>
                <Avatar>C</Avatar>
                <PersonName>Chowdhury Rafeed Rahman</PersonName>
            </Tile>
        </Participants>
    </Meeting>
);

export default App;
